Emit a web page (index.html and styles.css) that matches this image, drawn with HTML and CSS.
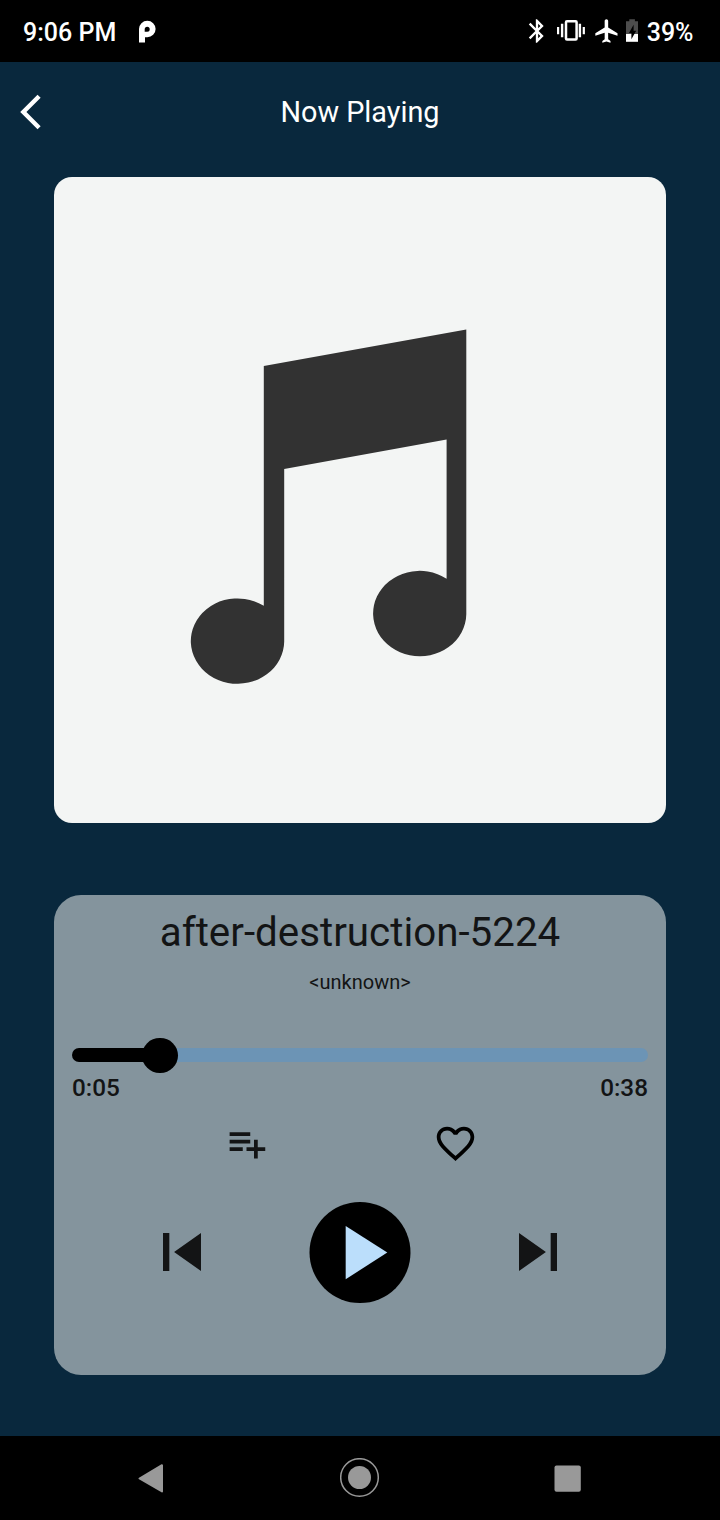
FILE: index.html
```html
<!DOCTYPE html>
<html lang="en">
<head>
<meta charset="utf-8">
<title>Now Playing</title>
<link rel="stylesheet" href="styles.css">
</head>
<body>
<div class="screen">
  <header class="status">
    <div class="status-left">
      <span class="clock">9:06 PM</span>
      <svg class="icon-p" width="20" height="26" viewBox="137 19 20 26"><path fill="#fff" fill-rule="evenodd" d="M139 42.600V29a8.300 8.300 0 1 1 8.300 8.300h-2.300v5.300zM144.700 31.700h2.500a2.500 2.500 0 1 0-2.500-2.500z"/></svg>
    </div>
    <div class="status-right">
      <svg width="28" height="28" viewBox="0 0 24 24"><path d="M17.710 7.710L12 2h-1v7.590L6.410 5 5 6.410 10.590 12 5 17.590 6.410 19 11 14.410V22h1l5.710-5.710-4.300-4.290 4.300-4.290zM13 5.830l1.880 1.880L13 9.590V5.830zm1.880 10.460L13 18.170v-3.760l1.880 1.880z"/></svg>
      <svg class="icon-vibrate" width="30" height="28" viewBox="555.500 17 30 28"><path d="M556.500 27h2.200v7.200h-2.200zM560.400 23.700h2.400v13.600h-2.400zM578.200 23.700h2.400v13.600h-2.400zM582.200 27h2.200v7.200h-2.200z"/><rect x="565.500" y="21.200" width="10.600" height="18.400" rx="1" fill="none" stroke="#fff" stroke-width="2.500"/></svg>
      <svg class="icon-plane" width="28" height="28" viewBox="0 0 24 24"><path d="M21 16v-2l-8-5V3.500c0-.83-.67-1.500-1.500-1.500S10 2.670 10 3.500V9l-8 5v2l8-2.500V19l-2 1.500V22l3.500-1 3.500 1v-1.500L13 19v-5.500l8 2.500z"/></svg>
      <svg class="icon-battery" width="14" height="28" viewBox="625 17 14 28"><path fill="#4d4d4d" d="M629.300 21.200V19.300h5.600v1.900H638V34h-12V21.200z"/><path d="M626 34h12v7.800h-12z"/><path fill="#000" d="M633.600 24.800v6h2.600l-4.800 8.500v-6.200h-2.400z"/></svg>
      <span class="battery-text">39%</span>
    </div>
  </header>

  <main class="app">
    <div class="appbar">
      <svg class="back" width="42" height="42" viewBox="0 0 24 24"><path fill="#fff" d="M17.510 3.870L15.730 2.100 5.840 12l9.900 9.900 1.770-1.770L9.380 12l8.130-8.130z"/></svg>
      <h1>Now Playing</h1>
      <span></span>
    </div>

    <div class="cover">
      <svg width="280" height="360" viewBox="188 327 280 360"><path fill="#323232" d="M263.800 366L466.300 329.500V614.200a46.600 42.700 0 1 1-19.700-35.500V439.500L284.200 469V641.500a46.700 42.700 0 1 1-20.400-35.700z"/></svg>
    </div>

    <section class="player">
      <h2 class="track">after-destruction-5224</h2>
      <p class="artist">&lt;unknown&gt;</p>
      <div class="slider">
        <div class="played"></div>
        <div class="thumb"></div>
        <div class="remaining"></div>
      </div>
      <div class="times"><span>0:05</span><span>0:38</span></div>
      <div class="extras">
        <svg width="45" height="45" viewBox="0 0 24 24"><path fill="#131415" d="M14 10H3v2h11v-2zm0-4H3v2h11V6zm4 8v-4h-2v4h-4v2h4v4h2v-4h4v-2h-4zM3 16h7v-2H3v2z"/></svg>
        <svg width="45" height="45" viewBox="0 0 24 24"><path d="M16.500 3c-1.740 0-3.410.81-4.500 2.090C10.910 3.810 9.240 3 7.500 3 4.420 3 2 5.420 2 8.500c0 3.780 3.400 6.860 8.550 11.540L12 21.350l1.450-1.320C18.600 15.360 22 12.280 22 8.500 22 5.420 19.580 3 16.500 3zm-4.400 15.550l-.1.100-.1-.1C7.140 14.240 4 11.390 4 8.500 4 6.500 5.500 5 7.500 5c1.540 0 3.040.99 3.570 2.360h1.870C13.460 5.990 14.960 5 16.500 5c2 0 3.500 1.500 3.500 3.500 0 2.890-3.140 5.740-7.900 10.050z"/></svg>
      </div>
      <div class="controls">
        <svg width="76" height="76" viewBox="0 0 24 24"><path fill="#131415" d="M6 6h2v12H6zm3.500 6l8.500 6V6z"/></svg>
        <svg width="102" height="102" viewBox="309 1201 102 102"><circle cx="360" cy="1252.500" r="50.500"/><path fill="#bbdefb" d="M345.700 1226v53.200l41.600-26.600z"/></svg>
        <svg width="76" height="76" viewBox="0 0 24 24"><path fill="#131415" d="M6 18l8.500-6L6 6v12zM16 6v12h2V6h-2z"/></svg>
      </div>
    </section>
  </main>

  <nav class="navbar">
    <svg width="40" height="40" viewBox="131 1458 40 40"><path fill="#999" stroke="#999" stroke-width="2" stroke-linejoin="round" d="M139.500 1478.500L162 1465.200v26.300z"/></svg>
    <svg width="40" height="40" viewBox="340 1458 40 40"><circle cx="359.500" cy="1477.500" r="18.800" fill="none" stroke="#999" stroke-width="1.500"/><circle cx="359.500" cy="1477.500" r="11.500" fill="#999"/></svg>
    <svg width="40" height="40" viewBox="548 1458 40 40"><rect x="554.500" y="1465.500" width="26.300" height="26.300" rx="2" fill="#999"/></svg>
  </nav>
</div>
</body>
</html>
```
FILE: styles.css
```css
* { box-sizing: border-box; }
body { margin: 0; font-family: Roboto, sans-serif; background: #000; }
h1, h2, p { margin: 0; font-weight: 400; }
svg { display: block; flex: none; }

.screen { width: 720px; height: 1520px; display: flex; flex-direction: column; }

.status {
  height: 62px; padding: 1px 26.5px 0 23px; background: #000; color: #fff;
  display: flex; justify-content: space-between; align-items: center;
  font-size: 25px; font-weight: 500; line-height: 62px;
}
.status-left, .status-right { display: flex; align-items: center; }
.status-left { gap: 20.7px; padding-top: 2px; }
.icon-p { margin-top: -2px; }
.status-right { padding-top: 2px; }
.status-right svg { fill: #fff; margin-top: -4px; }
.icon-vibrate { margin-left: 4.5px; }
.icon-plane { margin-left: 7px; }
.icon-battery { margin-left: 4px; }
.battery-text { margin-left: 8px; }

.app { flex: 1; padding: 0 54px; background: #09283d; display: flex; flex-direction: column; }
.appbar {
  height: 100px; margin: 0 -43px 15px -44px; flex: none;
  display: grid; grid-template-columns: 42px 1fr 42px; align-items: center;
}
.appbar h1 { color: #fff; font-size: 28.8px; text-align: center; padding-left: 1px; }

.cover {
  height: 646px; border-radius: 18px; background: #f3f5f4; flex: none;
  padding: 150px 0 0 134px;
}

.player {
  height: 479.5px; margin-top: 72px; padding: 0 18px; border-radius: 27px;
  background: #84949d; color: #131415; flex: none;
}
.track { font-size: 40.35px; line-height: 48px; padding-top: 14px; text-align: center; white-space: nowrap; }
.artist { font-size: 20px; line-height: 24px; margin-top: 13px; text-align: center; }
.slider { height: 36px; margin-top: 43px; padding-top: 0.5px; display: flex; align-items: center; }
.played { width: 88px; height: 14px; margin-right: -17.7px; border-radius: 7px 0 0 7px; background: #000; }
.thumb { width: 35.4px; height: 35px; border-radius: 50%; background: #000; z-index: 1; }
.remaining { flex: 1; height: 14px; margin-left: -1px; border-radius: 0 7px 7px 0; background: #6c94b5; }
.times {
  display: flex; justify-content: space-between; padding-top: 1px;
  font-size: 24.3px; font-weight: 500; line-height: 28px;
}
.extras { margin-top: 19px; padding-left: 152px; display: flex; gap: 164px; }
.controls { margin-top: 35px; display: flex; justify-content: center; align-items: center; gap: 89px; }

.navbar {
  height: 84px; background: #000; padding: 0 132px 0 131px;
  display: flex; justify-content: space-between; align-items: center;
}
```
